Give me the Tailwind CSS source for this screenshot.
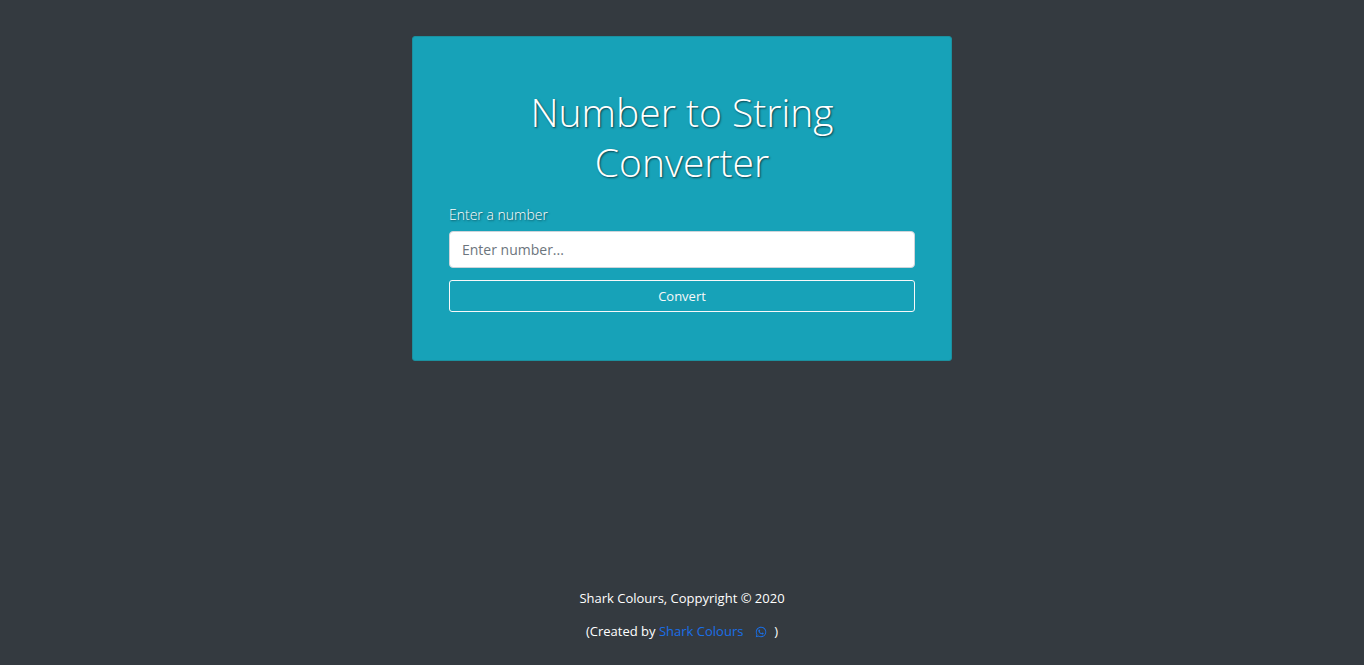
<!DOCTYPE html>
<html lang="en">
<head>
<meta charset="utf-8">
<meta name="viewport" content="width=device-width, initial-scale=1">
<title>Number to String Converter</title>
<script src="https://cdn.jsdelivr.net/npm/@tailwindcss/browser@4"></script>
</head>
<body class="flex min-h-screen flex-col items-center justify-between bg-[#343a40] px-4 pt-9 pb-6 font-['Open_Sans','Noto_Sans',sans-serif] text-[13px] leading-5 text-white">
  <main class="w-full max-w-[540px] rounded-[3px] border border-[#1b909f] bg-[#17a2b8] px-9 pt-[50px] pb-12">
    <h1 class="mb-[18px] text-center text-[39px] leading-[50px] font-light [text-shadow:1px_1px_2px_rgba(0,0,0,0.6)]">Number to String<br>Converter</h1>
    <form>
      <label for="number" class="mb-1.5 block text-[14px] leading-5 font-[350] [text-shadow:1px_1px_2px_rgba(0,0,0,0.5)]">Enter a number</label>
      <input id="number" type="text" placeholder="Enter number..." class="mb-3 block h-[37px] w-full rounded border border-[#ced4da] bg-white px-3 text-[14px] text-[#495057] placeholder:text-[#6c757d]">
      <button type="button" class="block h-8 w-full rounded-[3px] border border-[#f8f9fa] text-[13px] text-[#f8f9fa]">Convert</button>
    </form>
  </main>
  <footer class="flex flex-col gap-[13px] text-center">
    <p>Shark Colours, Coppyright © 2020</p>
    <p>(Created by <a href="#" class="text-[#1a6fe8]">Shark Colours</a>
      <a href="#" aria-label="WhatsApp" class="mr-1 ml-2 inline-block align-[-2px] text-[#1a6fe8]"><svg class="size-3" viewBox="0 0 448 512" fill="currentColor"><path d="M380.900 97.100C339 55.100 283.200 32 223.900 32c-122.400 0-222 99.600-222 222 0 39.100 10.200 77.300 29.600 111L0 480l117.700-30.900c32.400 17.700 68.900 27 106.100 27h.1c122.300 0 224.100-99.600 224.100-222 0-59.300-25.200-115-67.100-157zm-157 341.600c-33.200 0-65.700-8.900-94-25.700l-6.700-4-69.800 18.300L72 359.200l-4.400-7c-18.500-29.400-28.200-63.300-28.200-98.200 0-101.700 82.800-184.500 184.600-184.500 49.300 0 95.600 19.200 130.400 54.100 34.800 34.900 56.200 81.200 56.100 130.500 0 101.800-84.900 184.600-186.600 184.600zm101.200-138.200c-5.500-2.800-32.800-16.200-37.900-18-5.100-1.900-8.800-2.800-12.500 2.800-3.700 5.600-14.300 18-17.600 21.800-3.200 3.700-6.500 4.200-12 1.400-32.600-16.300-54-29.100-75.500-66-5.700-9.800 5.700-9.100 16.300-30.300 1.800-3.700.9-6.900-.5-9.700-1.400-2.800-12.500-30.100-17.100-41.200-4.500-10.800-9.100-9.300-12.500-9.500-3.200-.2-6.900-.2-10.600-.2-3.700 0-9.700 1.400-14.800 6.900-5.100 5.600-19.400 19-19.400 46.300 0 27.300 19.900 53.700 22.600 57.400 2.800 3.700 39.100 59.700 94.800 83.800 35.200 15.200 49 16.500 66.600 13.900 10.700-1.600 32.800-13.400 37.400-26.400 4.600-13 4.600-24.100 3.200-26.400-1.300-2.500-5-3.900-10.500-6.600z"/></svg></a>
      )</p>
  </footer>
</body>
</html>
